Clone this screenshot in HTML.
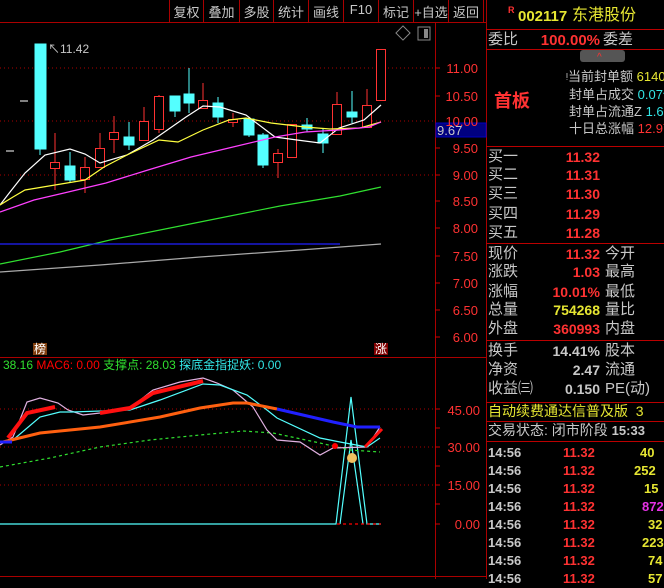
<!DOCTYPE html>
<html><head><meta charset="utf-8"><style>
*{margin:0;padding:0;box-sizing:border-box}
body{width:664px;height:579px;background:#000;overflow:hidden;position:relative;font-family:"Liberation Sans","Noto Sans CJK SC",sans-serif;}
.a{position:absolute;white-space:nowrap;line-height:1}
.lb{color:#c8c8c8;font-size:15px}
.v{font-weight:bold;font-size:14px;text-align:right}
.r{color:#ff3232}.y{color:#e6e632}.c{color:#32e6e6}.g{color:#c8c8c8}.m{color:#e632e6}
.hl{position:absolute;left:486px;width:178px;height:1px;background:#b00}
.btn{position:absolute;top:2px;color:#c8c8c8;font-size:13px;text-align:center}
</style></head><body>
<svg width="664" height="579" style="position:absolute;left:0;top:0">
<g stroke="#a00" stroke-width="1" fill="none">
<line x1="0" y1="22.5" x2="486" y2="22.5"/>
<line x1="435.5" y1="22" x2="435.5" y2="579"/>
<line x1="486.5" y1="0" x2="486.5" y2="579"/>
<line x1="0" y1="357.5" x2="486" y2="357.5"/>
<line x1="0" y1="576.5" x2="486" y2="576.5"/>
</g>
<g stroke="#a00" stroke-dasharray="1,3">
<line x1="0" y1="68" x2="435" y2="68"/><line x1="0" y1="121" x2="435" y2="121"/><line x1="0" y1="175" x2="435" y2="175"/>
<line x1="0" y1="409" x2="435" y2="409"/><line x1="0" y1="447" x2="435" y2="447"/><line x1="0" y1="485" x2="435" y2="485"/>
</g>
<g stroke="#c00"><line x1="435" y1="68" x2="440" y2="68"/><line x1="435" y1="96" x2="440" y2="96"/><line x1="435" y1="148" x2="440" y2="148"/><line x1="435" y1="175" x2="440" y2="175"/><line x1="435" y1="201" x2="440" y2="201"/><line x1="435" y1="228" x2="440" y2="228"/><line x1="435" y1="256" x2="440" y2="256"/><line x1="435" y1="283" x2="440" y2="283"/><line x1="435" y1="310" x2="440" y2="310"/><line x1="435" y1="337" x2="440" y2="337"/>
<line x1="435" y1="409" x2="440" y2="409"/><line x1="435" y1="428" x2="440" y2="428"/><line x1="435" y1="447" x2="440" y2="447"/><line x1="435" y1="466" x2="440" y2="466"/><line x1="435" y1="485" x2="440" y2="485"/><line x1="435" y1="504" x2="440" y2="504"/><line x1="435" y1="524" x2="440" y2="524"/></g>
<rect x="436" y="123" width="50" height="14" fill="#000080" stroke="#0000c0"/>
<!-- candles -->
<g stroke-width="1">
<g stroke="#54ffff" fill="#54ffff">
<line x1="40" y1="44" x2="40" y2="155"/><rect x="35" y="44" width="11" height="105"/>
<line x1="70" y1="152" x2="70" y2="183"/><rect x="65" y="166" width="10" height="14"/>
<line x1="129" y1="122" x2="129" y2="150"/><rect x="124" y="137" width="10" height="8"/>
<line x1="175" y1="96" x2="175" y2="117"/><rect x="170" y="96" width="10" height="15"/>
<line x1="189" y1="68" x2="189" y2="113"/><rect x="184" y="94" width="10" height="9"/>
<line x1="218" y1="97" x2="218" y2="123"/><rect x="213" y="103" width="10" height="14"/>
<line x1="249" y1="117" x2="249" y2="137"/><rect x="244" y="119" width="10" height="16"/>
<line x1="263" y1="133" x2="263" y2="168"/><rect x="258" y="135" width="10" height="30"/>
<line x1="307" y1="118" x2="307" y2="132"/><rect x="302" y="125" width="10" height="4"/>
<line x1="323" y1="128" x2="323" y2="153"/><rect x="318" y="134" width="10" height="9"/>
<line x1="352" y1="91" x2="352" y2="123"/><rect x="347" y="112" width="10" height="5"/>
</g>
<g stroke="#ff3232" fill="none">
<line x1="55" y1="133" x2="55" y2="190"/><rect x="50.5" y="162.5" width="9" height="6" fill="#000"/>
<line x1="85" y1="157" x2="85" y2="193"/><rect x="80.5" y="167.5" width="9" height="12" fill="#000"/>
<line x1="100" y1="133" x2="100" y2="167"/><rect x="95.5" y="148.5" width="9" height="19" fill="#000"/>
<line x1="114" y1="116" x2="114" y2="153"/><rect x="109.5" y="132.5" width="9" height="7" fill="#000"/>
<line x1="144" y1="107" x2="144" y2="140"/><rect x="139.5" y="121.5" width="9" height="19" fill="#000"/>
<line x1="159" y1="95" x2="159" y2="133"/><rect x="154.5" y="96.5" width="9" height="33" fill="#000"/>
<line x1="203" y1="83" x2="203" y2="108"/><rect x="198.5" y="100.5" width="9" height="8" fill="#000"/>
<line x1="233" y1="113" x2="233" y2="127"/><rect x="228.5" y="119.5" width="9" height="3" fill="#000"/>
<line x1="278" y1="149" x2="278" y2="178"/><rect x="273.5" y="153.5" width="9" height="9" fill="#000"/>
<rect x="287.5" y="124.5" width="9" height="33" fill="#000"/>
<line x1="337" y1="92" x2="337" y2="134"/><rect x="332.5" y="104.5" width="9" height="30" fill="#000"/>
<line x1="367" y1="89" x2="367" y2="127"/><rect x="362.5" y="105.5" width="9" height="22" fill="#000"/>
<rect x="376.5" y="49.5" width="9" height="51" fill="#000"/>
</g>
<line x1="20" y1="101" x2="28" y2="101" stroke="#fff"/><line x1="6" y1="151" x2="14" y2="151" stroke="#fff"/>
</g>
<g fill="none" stroke-width="1.2">
<polyline stroke="#fff" points="0,205 10,192 25,173 45,155 70,149 85,154 100,163 127,155 153,140 186,117 203,106 220,107 246,115 275,137 297,140 320,143 339,128 364,120 381,105"/>
<polyline stroke="#ffff40" points="0,205 13,197 25,190 55,185 85,180 104,167 127,155 159,140 178,142 203,130 229,120 246,118 271,123 305,127 330,129 360,128 381,122"/>
<polyline stroke="#ff40ff" points="0,212 34,200 64,193 106,183 148,170 191,157 233,147 275,137 305,132 339,130 369,127 381,122"/>
<polyline stroke="#30e030" points="0,264 60,252 110,240 200,222 280,206 340,196 381,187"/>
<polyline stroke="#aaa" points="0,272 100,265 200,257 300,250 381,244"/>
<line x1="0" y1="244" x2="340" y2="244" stroke="#2020ff"/>
<!-- lower -->
<polyline stroke="#54ffff" points="0,524 336,524 351,397 367,524 381,524"/>
<polyline stroke="#54ffff" points="340,524 351,440 363,524"/>
<line x1="337" y1="524" x2="381" y2="524" stroke="#f00" stroke-dasharray="3,3"/>
<polyline stroke="#30e030" stroke-dasharray="3,3" points="0,467 50,458 100,447 150,440 200,435 243,431 273,433 320,443 350,450 380,452"/>
<polyline stroke="#e0b0e0" points="0,445 13,437 27,402 40,398 58,403 68,410 83,415 100,413 130,408 153,390 180,382 203,378 217,383 233,390 253,407 267,430 277,440 300,442 320,455 333,448 367,447 380,427"/>
<polyline stroke="#54ffff" points="13,440 40,417 60,412 72,412 130,410 160,400 203,384 220,385 247,395 267,410 277,418 320,438 340,442 367,447 380,438"/>
<polyline stroke="#ff6010" stroke-width="3" points="3,442 40,433 100,427 160,417 200,408 233,403 247,403 277,409"/>
<polyline stroke="#2020ff" stroke-width="3" points="0,442 12,442"/>
<polyline stroke="#2020ff" stroke-width="3" points="277,409 333,422 357,427 380,427"/>
<polyline stroke="#ff1010" stroke-width="4" points="8,438 27,413 55,407"/>
<polyline stroke="#ff1010" stroke-width="4" points="100,413 130,408 153,393 203,381"/>
<polyline stroke="#ff1010" stroke-width="3" points="365,447 382,429"/>
</g>
<circle cx="335" cy="446" r="3" fill="#f00"/>
<circle cx="352" cy="458" r="5" fill="#f0c060"/>
<rect x="398" y="28" width="10" height="10" transform="rotate(45 403 33)" fill="none" stroke="#888"/>
<rect x="418" y="27" width="12" height="13" fill="none" stroke="#888"/><rect x="424" y="29" width="4" height="9" fill="#888"/>
<rect x="580" y="50" width="45" height="12" rx="3" fill="#555"/>
<text x="597" y="60" fill="#f33" font-size="10">^</text>
</svg>
<!-- toolbar -->
<div style="position:absolute;left:168px;top:0;width:318px;height:22px">
</div>
<svg width="664" height="22" style="position:absolute;left:0;top:0"><g stroke="#a00"><line x1="169.5" y1="0" x2="169.5" y2="22"/><line x1="203.5" y1="0" x2="203.5" y2="22"/><line x1="239.5" y1="0" x2="239.5" y2="22"/><line x1="273.5" y1="0" x2="273.5" y2="22"/><line x1="308.5" y1="0" x2="308.5" y2="22"/><line x1="343.5" y1="0" x2="343.5" y2="22"/><line x1="378.5" y1="0" x2="378.5" y2="22"/><line x1="413.5" y1="0" x2="413.5" y2="22"/><line x1="448.5" y1="0" x2="448.5" y2="22"/><line x1="483.5" y1="0" x2="483.5" y2="22"/></g></svg>
<div class="btn" style="left:170px;width:33px">复权</div>
<div class="btn" style="left:204px;width:35px">叠加</div>
<div class="btn" style="left:240px;width:33px">多股</div>
<div class="btn" style="left:274px;width:34px">统计</div>
<div class="btn" style="left:309px;width:34px">画线</div>
<div class="btn" style="left:344px;width:34px">F10</div>
<div class="btn" style="left:379px;width:34px">标记</div>
<div class="btn" style="left:413px;width:36px">+自选</div>
<div class="btn" style="left:449px;width:34px">返回</div>
<div class="a" style="left:48px;top:43px;color:#c8c8c8;font-size:12px">↖11.42</div>
<!-- axis labels -->
<div class="a r" style="left:440px;top:62px;font-size:13px;width:38px;text-align:right">11.00</div>
<div class="a r" style="left:440px;top:90px;font-size:13px;width:38px;text-align:right">10.50</div>
<div class="a r" style="left:440px;top:115px;font-size:13px;width:38px;text-align:right">10.00</div>
<div class="a" style="left:437px;top:124px;font-size:13px;color:#c8c8c8">9.67</div>
<div class="a r" style="left:440px;top:142px;font-size:13px;width:38px;text-align:right">9.50</div>
<div class="a r" style="left:440px;top:169px;font-size:13px;width:38px;text-align:right">9.00</div>
<div class="a r" style="left:440px;top:195px;font-size:13px;width:38px;text-align:right">8.50</div>
<div class="a r" style="left:440px;top:222px;font-size:13px;width:38px;text-align:right">8.00</div>
<div class="a r" style="left:440px;top:250px;font-size:13px;width:38px;text-align:right">7.50</div>
<div class="a r" style="left:440px;top:277px;font-size:13px;width:38px;text-align:right">7.00</div>
<div class="a r" style="left:440px;top:304px;font-size:13px;width:38px;text-align:right">6.50</div>
<div class="a r" style="left:440px;top:331px;font-size:13px;width:38px;text-align:right">6.00</div>
<div class="a r" style="left:440px;top:404px;font-size:13px;width:40px;text-align:right">45.00</div>
<div class="a r" style="left:440px;top:441px;font-size:13px;width:40px;text-align:right">30.00</div>
<div class="a r" style="left:440px;top:479px;font-size:13px;width:40px;text-align:right">15.00</div>
<div class="a r" style="left:440px;top:518px;font-size:13px;width:40px;text-align:right">0.00</div>
<div class="a" style="left:33px;top:343px;background:#804010;color:#fff;font-size:12px;padding:0 1px">榜</div>
<div class="a" style="left:374px;top:343px;background:#800000;color:#fff;font-size:12px;padding:0 1px">涨</div>
<div class="a" style="left:3px;top:359px;font-size:12px"><span style="color:#30e030">38.16 </span><span style="color:#f00">MAC6: 0.00 </span><span style="color:#30e030">支撑点: 28.03 </span><span class="c">探底金指捉妖: 0.00</span></div>
<!-- right panel -->
<div class="a r" style="left:508px;top:6px;font-size:9px;font-weight:bold">R</div>
<div class="a y" style="left:518px;top:9px;font-size:15px;font-weight:bold">002117</div>
<div class="a y" style="left:572px;top:8px;font-size:16px">东港股份</div>
<div class="hl" style="top:29px"></div>
<div class="a lb" style="left:488px;top:32px">委比</div>
<div class="a r v" style="left:540px;top:33px;width:60px;font-size:15px">100.00%</div>
<div class="a lb" style="left:603px;top:32px">委差</div>
<div class="hl" style="top:49px"></div>
<div class="a r" style="left:494px;top:92px;font-size:18px;font-weight:bold">首板</div>
<div class="a lb" style="left:566px;top:70px;font-size:13px">ᵎ当前封单额 <span class="y">61407</span></div>
<div class="a lb" style="left:569px;top:88px;font-size:13px">封单占成交 <span class="c">0.07倍</span></div>
<div class="a lb" style="left:569px;top:105px;font-size:13px">封单占流通Z <span class="c">1.65</span></div>
<div class="a lb" style="left:569px;top:122px;font-size:13px">十日总涨幅 <span class="r">12.97</span></div>
<div class="hl" style="top:146px"></div>
<div class="a lb" style="left:488px;top:149px">买一</div><div class="a r v" style="left:540px;top:150px;width:60px">11.32</div>
<div class="a lb" style="left:488px;top:167px">买二</div><div class="a r v" style="left:540px;top:168px;width:60px">11.31</div>
<div class="a lb" style="left:488px;top:186px">买三</div><div class="a r v" style="left:540px;top:187px;width:60px">11.30</div>
<div class="a lb" style="left:488px;top:206px">买四</div><div class="a r v" style="left:540px;top:207px;width:60px">11.29</div>
<div class="a lb" style="left:488px;top:225px">买五</div><div class="a r v" style="left:540px;top:226px;width:60px">11.28</div>
<div class="hl" style="top:243px"></div>
<div class="a lb" style="left:488px;top:246px">现价</div><div class="a r v" style="left:530px;top:247px;width:70px">11.32</div><div class="a lb" style="left:605px;top:246px">今开</div>
<div class="a lb" style="left:488px;top:264px">涨跌</div><div class="a r v" style="left:530px;top:265px;width:70px">1.03</div><div class="a lb" style="left:605px;top:264px">最高</div>
<div class="a lb" style="left:488px;top:284px">涨幅</div><div class="a r v" style="left:530px;top:285px;width:70px">10.01%</div><div class="a lb" style="left:605px;top:284px">最低</div>
<div class="a lb" style="left:488px;top:302px">总量</div><div class="a y v" style="left:530px;top:303px;width:70px">754268</div><div class="a lb" style="left:605px;top:302px">量比</div>
<div class="a lb" style="left:488px;top:321px">外盘</div><div class="a r v" style="left:530px;top:322px;width:70px">360993</div><div class="a lb" style="left:605px;top:321px">内盘</div>
<div class="hl" style="top:340px"></div>
<div class="a lb" style="left:488px;top:343px">换手</div><div class="a g v" style="left:530px;top:344px;width:70px">14.41%</div><div class="a lb" style="left:605px;top:343px">股本</div>
<div class="a lb" style="left:488px;top:362px">净资</div><div class="a g v" style="left:530px;top:363px;width:70px">2.47</div><div class="a lb" style="left:605px;top:362px">流通</div>
<div class="a lb" style="left:488px;top:381px">收益㈢</div><div class="a g v" style="left:530px;top:382px;width:70px">0.150</div><div class="a lb" style="left:605px;top:381px">PE(动)</div>
<div class="hl" style="top:402px"></div>
<div class="a y" style="left:488px;top:404px;font-size:14px">自动续费通达信普及版&nbsp; 3</div>
<div class="hl" style="top:421px"></div>
<div class="a lb" style="left:488px;top:423px;font-size:14px">交易状态: 闭市阶段 <b style="font-size:13px">15:33</b></div>
<div class="hl" style="top:441px"></div>
<div style="position:absolute;left:488px;top:444px;width:176px;font-weight:bold;font-size:13px;line-height:18px">
<div style="position:relative;height:18px"><span class="a g" style="left:0;top:2px">14:56</span><span class="a r" style="left:75px;top:2px">11.32</span><span class="a y" style="left:152px;top:2px">40</span></div>
<div style="position:relative;height:18px"><span class="a g" style="left:0;top:2px">14:56</span><span class="a r" style="left:75px;top:2px">11.32</span><span class="a y" style="left:146px;top:2px">252</span></div>
<div style="position:relative;height:18px"><span class="a g" style="left:0;top:2px">14:56</span><span class="a r" style="left:75px;top:2px">11.32</span><span class="a y" style="left:156px;top:2px">15</span></div>
<div style="position:relative;height:18px"><span class="a g" style="left:0;top:2px">14:56</span><span class="a r" style="left:75px;top:2px">11.32</span><span class="a m" style="left:154px;top:2px">872</span></div>
<div style="position:relative;height:18px"><span class="a g" style="left:0;top:2px">14:56</span><span class="a r" style="left:75px;top:2px">11.32</span><span class="a y" style="left:160px;top:2px">32</span></div>
<div style="position:relative;height:18px"><span class="a g" style="left:0;top:2px">14:56</span><span class="a r" style="left:75px;top:2px">11.32</span><span class="a y" style="left:154px;top:2px">223</span></div>
<div style="position:relative;height:18px"><span class="a g" style="left:0;top:2px">14:56</span><span class="a r" style="left:75px;top:2px">11.32</span><span class="a y" style="left:160px;top:2px">74</span></div>
<div style="position:relative;height:18px"><span class="a g" style="left:0;top:2px">14:56</span><span class="a r" style="left:75px;top:2px">11.32</span><span class="a y" style="left:160px;top:2px">57</span></div>
</div>
</body></html>
